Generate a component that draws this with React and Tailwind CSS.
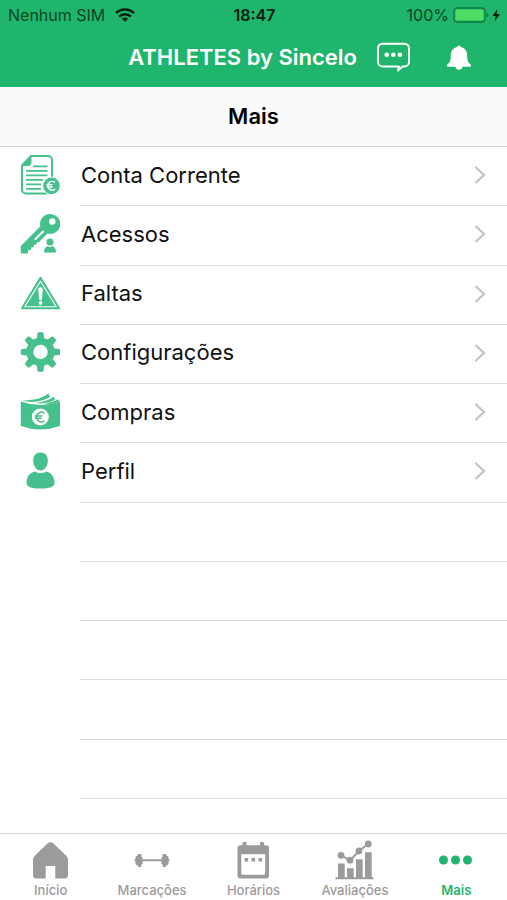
const ICON = "#46c08c";

function DocumentIcon() {
  return (
    <svg viewBox="0 0 40 40" className="size-10 mb-1" fill="none" stroke={ICON}>
      <path d="M11 1H28a4 4 0 0 1 4 4V34.500a4 4 0 0 1-4 4H6a4 4 0 0 1-4-4V10.500Z" strokeWidth="2" />
      <path d="M11 1V8a2.500 2.500 0 0 1-2.500 2.500H2Z" fill={ICON} strokeWidth="1" />
      <path d="M13 11.300h14.500M6 15.800h21.500M6 20.300h21.500M6 24.800h17M6 29.300h15M6 33.800h15" strokeWidth="1.700" />
      <circle cx="31.500" cy="30.800" r="8.800" fill={ICON} stroke="#fff" strokeWidth="1" />
      <path d="M35 27.400a4.400 4.400 0 1 0 0 6.800M26.500 29.800h6M26.500 32h6" stroke="#fff" strokeWidth="1.500" />
    </svg>
  );
}

function KeyIcon() {
  return (
    <svg viewBox="0 0 40 40" className="size-10 mb-1" fill={ICON}>
      <path
        fillRule="evenodd"
        d="M30 0a10 10 0 1 1-2.500 19.600L18.500 28.500 17 28.300 16.300 30.500 14 30.800 13.500 33.300 11.300 33.500 11 36 8 36.300V39.500H1.500Q.8 39.500.8 38.500V32L20.300 12.500A10 10 0 0 1 30 0ZM32.300 4.300a3.200 3.200 0 1 0 0 6.400 3.200 3.200 0 0 0 0-6.400Z"
      />
      <path d="M15.500 25 23 17.500" stroke="#fff" strokeWidth="2" strokeLinecap="round" />
      <circle cx="30" cy="28" r="3.500" />
      <path d="M24 38.500c0-4 1.500-6 4.200-6.500L30 33.500l1.800-1.500c2.700.5 4.200 2.500 4.200 6.500Z" />
    </svg>
  );
}

function WarningIcon() {
  return (
    <svg viewBox="0 0 40 40" className="size-10 mb-1" fill={ICON}>
      <path d="M20.500 4.800 39 35.300H2Z" stroke={ICON} strokeWidth="2" strokeLinejoin="round" />
      <path d="M20.500 8.200 36.300 33.700H4.700Z" fill="none" stroke="#fff" strokeWidth="1.100" strokeLinejoin="round" />
      <path d="M18.200 16.500a2.300 2.300 0 0 1 4.600 0l-.9 9.500a1.400 1.400 0 0 1-2.800 0Z" fill="#fff" />
      <circle cx="20.500" cy="29.900" r="1.900" fill="#fff" />
    </svg>
  );
}

function GearIcon() {
  return (
    <svg viewBox="0 0 40 40" className="size-10 mb-1" fill={ICON}>
      {[0, 45, 90, 135, 180, 225, 270, 315].map((angle) => (
        <path
          key={angle}
          transform={`rotate(${angle} 20.500 20)`}
          d="M18.800.3h3.400q1.300 0 1.400 1.300L24.300 8h-7.600l.7-6.400q.1-1.300 1.400-1.300Z"
        />
      ))}
      <circle cx="20.500" cy="20" r="10.700" fill="none" stroke={ICON} strokeWidth="7" />
    </svg>
  );
}

function MoneyIcon() {
  return (
    <svg viewBox="0 0 40 40" className="size-10 mb-1" fill={ICON}>
      <path d="M.8 9.500Q20.500 16.500 40 9.500V34Q20.500 41 .8 34Z" />
      <path d="M2 8.500C13 8.500 22 6.500 28.500 1.500L30 5C23 9.500 12 11.500 2 8.500Z" />
      <path d="M15 10.800C24 10 30 7.800 33.500 4.500L35 7.500C30 10.800 22 12.300 15 10.800Z" />
      <path d="M24 11.500C30 10.800 35 9.300 38 7.300L39.500 9C36 11.500 30 12.700 24 11.500Z" />
      <circle cx="20.300" cy="25" r="8.500" fill="#fff" />
      <path d="M24.300 21.100a4.800 4.800 0 1 0 0 7.800M14.800 24h7.500M14.800 26.200h6.800" fill="none" stroke={ICON} strokeWidth="1.600" />
    </svg>
  );
}

function PersonIcon() {
  return (
    <svg viewBox="0 0 40 40" className="size-10 mb-1" fill={ICON}>
      <path d="M20.500 1.500c4.800 0 7.300 3.500 7.300 8 0 5.500-3 10-7.300 10s-7.300-4.500-7.300-10c0-4.500 2.500-8 7.300-8Z" />
      <path d="M14.500 20.500q6 3.500 12 0c5 1.500 8 5.500 8 11.500q0 5.500-14 5.500t-14-5.500c0-6 3-10 8-11.500Z" />
    </svg>
  );
}

function HomeIcon() {
  return (
    <svg viewBox="1 0 40 40" className="size-10" fill="currentColor">
      <path d="M17.500 3.500q3-2.500 6 0L36.500 16q1.500 1.500 1.500 3.500V35q0 3.500-3.500 3.500H25.300V26H15.700V38.500H6.500Q3 38.500 3 35V19.500Q3 17.500 4.500 16Z" />
    </svg>
  );
}

function DumbbellIcon() {
  return (
    <svg viewBox="0 0 40 40" className="size-10" fill="currentColor">
      <path d="M2.500 19.200h35v2h-35Z" />
      <rect x="3.500" y="16" width="3" height="9" rx="1" />
      <rect x="5.500" y="14" width="4" height="13" rx="1.300" />
      <rect x="33.500" y="16" width="3" height="9" rx="1" />
      <rect x="30.500" y="14" width="4" height="13" rx="1.300" />
      <rect x="9" y="17" width="1.500" height="7" />
      <rect x="29.500" y="17" width="1.500" height="7" />
    </svg>
  );
}

function CalendarIcon() {
  return (
    <svg viewBox="0 0 40 40" className="size-10" fill="currentColor">
      <rect x="9.500" y="1.800" width="4" height="7" rx="1.500" />
      <rect x="27" y="1.800" width="4" height="7" rx="1.500" />
      <path
        fillRule="evenodd"
        d="M7.500 5.300H33q3 0 3 3V35.500q0 3-3 3H7.500q-3 0-3-3V8.300q0-3 3-3ZM8.300 14.200V33.300q0 1.500 1.500 1.500H30.700q1.500 0 1.500-1.500V14.200Z"
      />
      <path d="M11.500 18h3.600v3.600h-3.600ZM18.500 18h3.600v3.600h-3.600ZM25.500 18h3.600v3.600h-3.600Z" />
    </svg>
  );
}

function ChartIcon() {
  return (
    <svg viewBox="1 0 40 40" className="size-10" fill="currentColor">
      <path d="M1.500 37.300h38v2h-38ZM4 23.500h6.700V38H4ZM13 28.300h6.700V38H13ZM22 19.200h6.700V38H22ZM31 12.300h6.700V38H31Z" />
      <path d="M7 15.300 16 20.500 25 11 34.500 3.500" fill="none" stroke="currentColor" strokeWidth="1.900" />
      <circle cx="7" cy="15.300" r="3.400" />
      <circle cx="16" cy="20.200" r="3.400" />
      <circle cx="25" cy="11" r="3.400" />
      <circle cx="34.300" cy="4" r="3.400" />
    </svg>
  );
}

function DotsIcon() {
  return (
    <svg viewBox="1 0 40 40" className="size-10" fill="currentColor">
      <circle cx="8.500" cy="20" r="4.500" />
      <circle cx="20.500" cy="20" r="4.500" />
      <circle cx="32.500" cy="20" r="4.500" />
    </svg>
  );
}

const items = [
  { label: "Conta Corrente", Icon: DocumentIcon },
  { label: "Acessos", Icon: KeyIcon },
  { label: "Faltas", Icon: WarningIcon },
  { label: "Configurações", Icon: GearIcon },
  { label: "Compras", Icon: MoneyIcon },
  { label: "Perfil", Icon: PersonIcon },
];

const tabs = [
  { label: "Início", Icon: HomeIcon },
  { label: "Marcações", Icon: DumbbellIcon },
  { label: "Horários", Icon: CalendarIcon },
  { label: "Avaliações", Icon: ChartIcon },
  { label: "Mais", Icon: DotsIcon, active: true },
];

function StatusBar() {
  return (
    <div className="grid grid-cols-3 items-center h-7 pt-0.5 pl-2 pr-1.5 text-[#07451f] text-base">
      <div className="flex items-center gap-2.5 whitespace-nowrap">
        <span>Nenhum SIM</span>
        <svg viewBox="0 0 20 14" className="w-5 h-3.5 text-[#04200e]" fill="none" stroke="currentColor" strokeWidth="2.600">
          <path d="M1 5.200a12.800 12.800 0 0 1 18 0M4.200 8.700a8.200 8.200 0 0 1 11.600 0" />
          <path d="M10 13.700 6.900 10.700a4.400 4.400 0 0 1 6.200 0Z" fill="currentColor" stroke="none" />
        </svg>
      </div>
      <span className="text-center font-semibold text-[#04200e]">18:47</span>
      <div className="flex items-center justify-end gap-1">
        <span>100%</span>
        <svg viewBox="0 0 48 16" className="w-12 h-4">
          <rect x="1" y="1" width="31" height="14" rx="3" fill="none" stroke="#0f7a3c" strokeWidth="1.300" />
          <rect x="2.500" y="2.500" width="28" height="11" rx="1.800" fill="#4fdc64" />
          <path d="M33.500 5.500q2 .8 2 2.500t-2 2.500Z" fill="#0f7a3c" />
          <path d="M44.500 2 39.500 9h3.300l-1.300 5.500L47 7h-3.500Z" fill="#04200e" />
        </svg>
      </div>
    </div>
  );
}

export default function App() {
  return (
    <div className="min-h-screen flex flex-col bg-white text-[#111] font-['Inter',sans-serif]">
      <header className="bg-[#1fb56c]">
        <StatusBar />
        <div className="flex items-center justify-end h-[59px] pr-8 text-white">
          <h1 className="text-[22px] font-semibold whitespace-nowrap">ATHLETES by Sincelo</h1>
          <button aria-label="Mensagens" className="ml-5">
            <svg viewBox="0 0 34 32" className="w-[34px] h-8" fill="none" stroke="#fff">
              <path
                d="M5.500 1.700H27.500a4.500 4.500 0 0 1 4.500 4.500V20a4.500 4.500 0 0 1-4.500 4.500H25.500L21 28.500 22 24.500H5.500A4.500 4.500 0 0 1 1 20V6.200A4.500 4.500 0 0 1 5.500 1.700Z"
                strokeWidth="1.900"
                strokeLinejoin="round"
              />
              <g fill="#fff" stroke="none">
                <circle cx="9.700" cy="12.700" r="2.300" />
                <circle cx="16.300" cy="12.700" r="2.300" />
                <circle cx="22.900" cy="12.700" r="2.300" />
              </g>
            </svg>
          </button>
          <button aria-label="Notificações" className="ml-8">
            <svg viewBox="0 0 32 32" className="size-8" fill="#fff">
              <path d="M16 3.500q1.600 0 1.900 1.600c4 1 6.300 4 6.300 8.300 0 4.800.8 7 3 8.500q1 .7.900 1.900 0 1-1.300 1H19.600a3.700 3.700 0 0 1-7.200 0H5.200q-1.300 0-1.300-1-.1-1.200.9-1.900c2.200-1.500 3-3.700 3-8.500 0-4.300 2.300-7.300 6.300-8.300Q14.400 3.500 16 3.500Z" />
            </svg>
          </button>
        </div>
      </header>

      <h2 className="h-[60px] flex items-center justify-center bg-[#fafafa] border-b border-[#d4d4d4] text-[22px] font-semibold text-black">
        Mais
      </h2>

      <main className="grow flex flex-col">
        {items.map(({ label, Icon }) => (
          <a key={label} href="#" className="grow basis-14 flex items-center pl-5">
            <Icon />
            <span className="self-stretch flex-1 flex items-center justify-between ml-5 pl-px pr-5 pb-0.5 border-b border-[#dedede] text-[22px]">
              {label}
              <svg viewBox="0 0 14 20" className="w-3.5 h-5" fill="none" stroke="#c4c4c8" strokeWidth="2.200">
                <path d="M2.500 2 11 10 2.500 18" />
              </svg>
            </span>
          </a>
        ))}
        {[1, 2, 3, 4, 5].map((row) => (
          <div key={row} className="grow basis-14 ml-20 border-b border-[#dedede]" />
        ))}
        <div className="h-[34px]" />
      </main>

      <nav className="grid grid-cols-5 h-[67px] pt-1.5 border-t border-[#d4d4d4] bg-white">
        {tabs.map(({ label, Icon, active }) => (
          <a
            key={label}
            href="#"
            className={`flex flex-col items-center text-[13px] leading-5 ${active ? "text-[#1fb56c] font-semibold" : "text-[#9b9b9b] font-medium"}`}
          >
            <Icon />
            <span>{label}</span>
          </a>
        ))}
      </nav>
    </div>
  );
}
